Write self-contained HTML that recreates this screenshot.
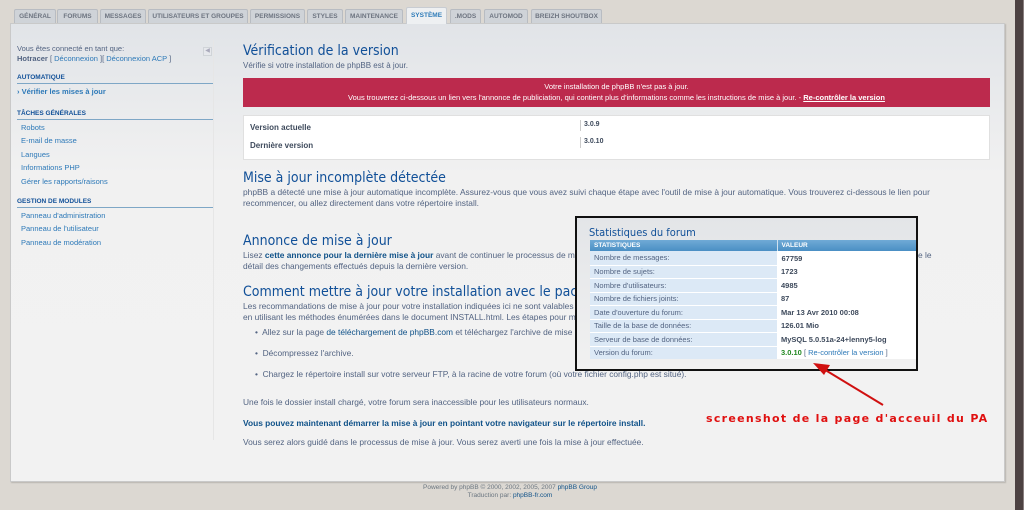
<!DOCTYPE html>
<html><head><meta charset="utf-8">
<style>
*{margin:0;padding:0;box-sizing:border-box}
body{width:1024px;height:510px;background:#dcd8d2;font-family:"Liberation Sans",Verdana,sans-serif;font-size:8.4px;color:#536482;position:relative;overflow:hidden}
.a{position:absolute;white-space:nowrap}
.tab{position:absolute;top:9px;height:14px;background:#cfd3d8;border:1px solid #b8bcc2;border-bottom:none;font-size:6.5px;font-weight:bold;color:#6d7480;text-align:center;line-height:13px;border-radius:2px 2px 0 0;white-space:nowrap;overflow:hidden}
.tab.on{background:#eef0f2;color:#2e7bb8;top:7px;height:17px;line-height:16px;border-color:#c8ccd2}
#panel{position:absolute;left:10px;top:23px;width:995px;height:459px;background:linear-gradient(#e1e4e8,#f1f1f1 150px,#f2f2f2);border:1px solid #c9c9c9;box-shadow:1px 1px 1px #b9b6b0}
h1,h2{position:absolute;font-weight:normal;color:#115098;font-size:14px;white-space:nowrap;font-family:"DejaVu Sans Condensed","Liberation Sans",sans-serif}
.sh{position:absolute;left:17px;width:196px;font-size:6.5px;font-weight:bold;color:#115098;border-bottom:1px solid #7ea7c6;padding-bottom:2px}
.sl{position:absolute;left:21px;color:#2d79b8;font-size:7.5px}
.b{font-weight:bold}
.lk{color:#105289;font-weight:bold}
table{border-collapse:collapse}
</style></head><body>
<div style="position:absolute;left:1015px;top:0;width:8px;height:510px;background:#4d4242"></div>
<div style="position:absolute;left:1023px;top:0;width:1px;height:510px;background:#8a8080"></div>

<div class="tab" style="left:14px;width:42px">GÉNÉRAL</div>
<div class="tab" style="left:57px;width:41px">FORUMS</div>
<div class="tab" style="left:100px;width:46px">MESSAGES</div>
<div class="tab" style="left:148px;width:100px">UTILISATEURS ET GROUPES</div>
<div class="tab" style="left:250px;width:55px">PERMISSIONS</div>
<div class="tab" style="left:307px;width:36px">STYLES</div>
<div class="tab" style="left:345px;width:58px">MAINTENANCE</div>
<div class="tab" style="left:450px;width:31px">.MODS</div>
<div class="tab" style="left:484px;width:44px">AUTOMOD</div>
<div class="tab" style="left:531px;width:71px">BREIZH SHOUTBOX</div>

<div id="panel"></div>
<div class="tab on" style="left:406px;width:41px">SYSTÈME</div>

<div style="position:absolute;left:213px;top:40px;width:1px;height:400px;background:#e6e6e6"></div>
<div class="a" style="left:17px;top:44px;font-size:7.5px;color:#536482">Vous êtes connecté en tant que:</div>
<div class="a" style="left:17px;top:54px;font-size:7.5px"><b>Hotracer</b> [ <span style="color:#2d79b8">Déconnexion</span> ][ <span style="color:#2d79b8">Déconnexion ACP</span> ]</div>
<div class="a" style="left:203px;top:47px;width:9px;height:9px;background:#e6e8ec;border:1px solid #d0d4d8;color:#aab;font-size:6px;line-height:7px;text-align:center">◀</div>

<div class="sh" style="top:74px">AUTOMATIQUE</div>
<div class="a" style="left:17px;top:87px;font-size:7.5px;font-weight:bold;color:#2d79b8">› Vérifier les mises à jour</div>
<div class="sh" style="top:110px">TÂCHES GÉNÉRALES</div>
<div class="sl" style="top:123px">Robots</div>
<div class="sl" style="top:136px">E-mail de masse</div>
<div class="sl" style="top:150px">Langues</div>
<div class="sl" style="top:163px">Informations PHP</div>
<div class="sl" style="top:177px">Gérer les rapports/raisons</div>
<div class="sh" style="top:198px">GESTION DE MODULES</div>
<div class="sl" style="top:211px">Panneau d'administration</div>
<div class="sl" style="top:224px">Panneau de l'utilisateur</div>
<div class="sl" style="top:238px">Panneau de modération</div>

<h1 style="left:243px;top:43px">Vérification de la version</h1>
<div class="a" style="left:243px;top:61px;font-size:8px">Vérifie si votre installation de phpBB est à jour.</div>
<div class="a" style="left:243px;top:78px;width:747px;height:29px;background:#bc2a4d;color:#fff;text-align:center;font-size:7.5px;line-height:11px;padding-top:3px">Votre installation de phpBB n'est pas à jour.<br>Vous trouverez ci-dessous un lien vers l'annonce de publiciation, qui contient plus d'informations comme les instructions de mise à jour. - <b style="text-decoration:underline">Re-contrôler la version</b></div>
<div class="a" style="left:243px;top:115px;width:747px;height:45px;background:#fff;border:1px solid #e0e0e0"></div>
<div class="a b" style="left:250px;top:123px;color:#3e4a5c;font-size:8px">Version actuelle</div>
<div class="a b" style="left:250px;top:141px;color:#3e4a5c;font-size:8px">Dernière version</div>
<div class="a" style="left:580px;top:120px;width:1px;height:11px;background:#ccc"></div>
<div class="a" style="left:580px;top:137px;width:1px;height:11px;background:#ccc"></div>
<div class="a b" style="left:584px;top:121px;color:#3e4a5c;font-size:7px">3.0.9</div>
<div class="a b" style="left:584px;top:138px;color:#3e4a5c;font-size:7px">3.0.10</div>

<h2 style="left:243px;top:170px">Mise à jour incomplète détectée</h2>
<div class="a" style="left:243px;top:187px;line-height:11px">phpBB a détecté une mise à jour automatique incomplète. Assurez-vous que vous avez suivi chaque étape avec l'outil de mise à jour automatique. Vous trouverez ci-dessous le lien pour<br>recommencer, ou allez directement dans votre répertoire install.</div>

<h2 style="left:243px;top:233px">Annonce de mise à jour</h2>
<div class="a" style="left:243px;top:250px;line-height:11px">Lisez <span class="lk">cette annonce pour la dernière mise à jour</span> avant de continuer le processus de mise à jour, elle peut contenir des informations utiles. Elle contient également les liens ainsi que le<br>détail des changements effectués depuis la dernière version.</div>

<h2 style="left:243px;top:284px">Comment mettre à jour votre installation avec le pack de mise à jour automatique</h2>
<div class="a" style="left:243px;top:301px;line-height:11px">Les recommandations de mise à jour pour votre installation indiquées ici ne sont valables que si vous avez suivi toutes les étapes de mise à jour. Mettez à jour votre installation<br>en utilisant les méthodes énumérées dans le document INSTALL.html. Les étapes pour mettre à jour votre installation sont les suivantes :</div>
<div class="a" style="left:255px;top:327px">•&nbsp; Allez sur la page <span style="color:#105289">de téléchargement de phpBB.com</span> et téléchargez l'archive de mise à jour automatique.</div>
<div class="a" style="left:255px;top:348px">•&nbsp; Décompressez l'archive.</div>
<div class="a" style="left:255px;top:369px">•&nbsp; Chargez le répertoire install sur votre serveur FTP, à la racine de votre forum (où votre fichier config.php est situé).</div>
<div class="a" style="left:243px;top:397px">Une fois le dossier install chargé, votre forum sera inaccessible pour les utilisateurs normaux.</div>
<div class="a lk" style="left:243px;top:418px">Vous pouvez maintenant démarrer la mise à jour en pointant votre navigateur sur le répertoire install.</div>
<div class="a" style="left:243px;top:437px">Vous serez alors guidé dans le processus de mise à jour. Vous serez averti une fois la mise à jour effectuée.</div>

<!-- overlay -->
<div class="a" style="left:575px;top:216px;width:343px;height:155px;background:linear-gradient(#e3e5e8,#f1f1f1);border:2px solid #111;overflow:hidden">
 <div class="a" style="left:12px;top:8px;font-size:11px;color:#115098;font-family:'DejaVu Sans Condensed','Liberation Sans',sans-serif">Statistiques du forum</div>
 <table class="a" style="left:13px;top:22px;width:340px;font-size:7.5px">
  <tr style="background:linear-gradient(#70aad6,#4a8fc4);color:#fff;font-weight:bold;font-size:6.5px;height:11px"><td style="width:187px;padding-left:4px;border-right:1px solid #cfe1ef">STATISTIQUES</td><td style="padding-left:4px">VALEUR</td></tr>
  <tr style="height:14px"><td style="background:#dce9f6;padding-left:4px;border-bottom:1px solid #fff;border-right:1px solid #fff">Nombre de messages:</td><td style="background:#fff;padding-left:4px;font-weight:bold;color:#3e4a5c">67759</td></tr>
  <tr style="height:13px"><td style="background:#dce9f6;padding-left:4px;border-bottom:1px solid #fff">Nombre de sujets:</td><td style="background:#fff;padding-left:4px;font-weight:bold;color:#3e4a5c">1723</td></tr>
  <tr style="height:14px"><td style="background:#dce9f6;padding-left:4px;border-bottom:1px solid #fff">Nombre d'utilisateurs:</td><td style="background:#fff;padding-left:4px;font-weight:bold;color:#3e4a5c">4985</td></tr>
  <tr style="height:13px"><td style="background:#dce9f6;padding-left:4px;border-bottom:1px solid #fff">Nombre de fichiers joints:</td><td style="background:#fff;padding-left:4px;font-weight:bold;color:#3e4a5c">87</td></tr>
  <tr style="height:14px"><td style="background:#dce9f6;padding-left:4px;border-bottom:1px solid #fff">Date d'ouverture du forum:</td><td style="background:#fff;padding-left:4px;font-weight:bold;color:#3e4a5c">Mar 13 Avr 2010 00:08</td></tr>
  <tr style="height:13px"><td style="background:#dce9f6;padding-left:4px;border-bottom:1px solid #fff">Taille de la base de données:</td><td style="background:#fff;padding-left:4px;font-weight:bold;color:#3e4a5c">126.01 Mio</td></tr>
  <tr style="height:14px"><td style="background:#dce9f6;padding-left:4px;border-bottom:1px solid #fff">Serveur de base de données:</td><td style="background:#fff;padding-left:4px;font-weight:bold;color:#3e4a5c">MySQL 5.0.51a-24+lenny5-log</td></tr>
  <tr style="height:13px"><td style="background:#dce9f6;padding-left:4px">Version du forum:</td><td style="background:#fff;padding-left:4px"><b style="color:#228822">3.0.10</b> [ <span style="color:#2d79b8">Re-contrôler la version</span> ]</td></tr>
 </table>
</div>

<svg class="a" style="left:800px;top:355px" width="100" height="60"><line x1="83" y1="50" x2="22" y2="13" stroke="#d01010" stroke-width="2"/><polygon points="13,8 30,10 24,20" fill="#d01010"/></svg>
<div class="a" style="left:706px;top:412px;color:#e01010;font-weight:bold;font-size:11px;letter-spacing:1.3px;font-family:'DejaVu Sans','Liberation Sans',sans-serif">screenshot de la page d'acceuil du PA</div>

<div class="a" style="left:0;width:1020px;top:484px;text-align:center;font-size:6.5px;line-height:8px;color:#6b7680">Powered by phpBB © 2000, 2002, 2005, 2007 <span style="color:#105289">phpBB Group</span><br>Traduction par: <span style="color:#105289">phpBB-fr.com</span></div>
</body></html>
